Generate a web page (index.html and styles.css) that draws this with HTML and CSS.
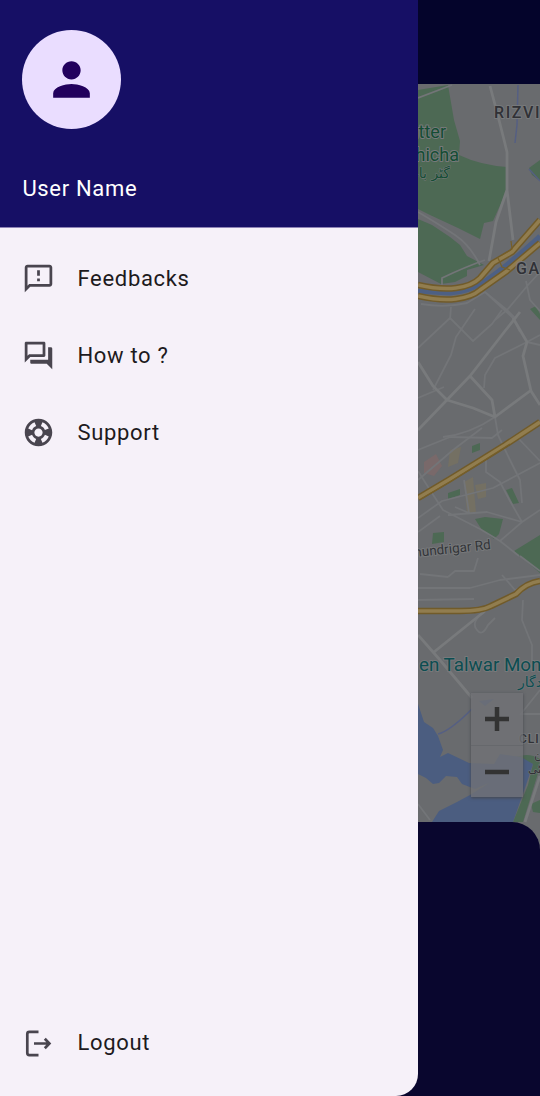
FILE: index.html
```html
<!DOCTYPE html>
<html lang="en">
<head>
<meta charset="utf-8">
<title>Menu</title>
<link rel="stylesheet" href="styles.css">
</head>
<body>
<div class="screen">
  <aside class="drawer">
    <header class="profile">
      <div class="avatar">
        <svg viewBox="0 0 24 24"><path d="M12 12c2.21 0 4-1.79 4-4s-1.79-4-4-4-4 1.79-4 4 1.79 4 4 4zm0 2c-2.67 0-8 1.34-8 4v2h16v-2c0-2.66-5.33-4-8-4z"/></svg>
      </div>
      <div class="name">User Name</div>
    </header>
    <nav class="menu">
      <a class="item"><svg class="icon" viewBox="0 0 24 24"><path d="M20 2H4c-1.1 0-2 .9-2 2v18l4-4h14c1.1 0 2-.9 2-2V4c0-1.1-.9-2-2-2zm0 14H5.2L4 17.2V4h16v12zM11 12h2v2h-2zm0-6h2v4h-2z"/></svg><span>Feedbacks</span></a>
      <a class="item"><svg class="icon" viewBox="0 0 24 24"><path d="M15 4v7H5.17L4 12.17V4h11m1-2H3c-.55 0-1 .45-1 1v14l4-4h10c.55 0 1-.45 1-1V3c0-.55-.45-1-1-1zm5 4h-2v9H6v2c0 .55.45 1 1 1h11l4 4V7c0-.55-.45-1-1-1z"/></svg><span>How to ?</span></a>
      <a class="item"><svg class="icon" viewBox="0 0 24 24"><path d="M12 2C6.48 2 2 6.48 2 12s4.48 10 10 10 10-4.48 10-10S17.52 2 12 2zm7.46 7.12l-2.78 1.15c-.51-1.36-1.58-2.44-2.95-2.94l1.15-2.78c2.1.8 3.77 2.47 4.58 4.57zM12 15c-1.66 0-3-1.34-3-3s1.34-3 3-3 3 1.34 3 3-1.34 3-3 3zM9.13 4.54l1.17 2.78c-1.38.5-2.47 1.59-2.98 2.97L4.54 9.13c.81-2.11 2.48-3.78 4.59-4.59zM4.54 14.87l2.78-1.15c.51 1.38 1.59 2.46 2.97 2.96l-1.17 2.78c-2.1-.81-3.77-2.48-4.58-4.59zm10.34 4.59l-1.15-2.78c1.37-.51 2.45-1.59 2.95-2.97l2.78 1.17c-.81 2.1-2.48 3.77-4.58 4.58z"/></svg><span>Support</span></a>
      <a class="item logout"><svg class="icon line" viewBox="0 0 33 33"><path d="M16.5 5.9H7.3Q5.3 5.9 5.3 7.9V27.1Q5.3 29.1 7.3 29.1H16.5M12 17.5H27M22.8 12.7 27.4 17.5 22.8 22.3"/></svg><span>Logout</span></a>
    </nav>
  </aside>
  <main class="behind">
    <div class="topbar"></div>
    <div class="mapwrap">
      <svg class="map" viewBox="418 84 122 766">
        <rect class="land" x="418" y="84" width="122" height="766"/>
        <g class="park">
          <path d="M418 90 448 85 454 120 460 141 459 155Q480 165 507 167V190L493 221 484 223 480 239 458 228 430 215 418 209Z"/>
          <path d="M418 219 432 225 450 237 460 245 467 256 484 265 467 270V276L455 282 441 284 418 272Z"/>
          <path d="M529 168 540 160V181L532 175ZM530 309 536 306 540 314V320Z"/>
          <path d="M472 446 480 443V450L472 453ZM448 493 460 489V495L448 499ZM506 490 512 488 519 503 513 504Z"/>
          <path d="M475 519 485 517 503 519 499 534 494 539 482 530ZM433 533 444 532V542L432 544ZM514 551 540 535V573Z"/>
          <path d="M516 757Q529 752 540 759L539 770 523 822H513L528 785 533 764ZM531 804 540 800V813L533 812Z"/>
        </g>
        <path class="hospital" d="M424 462 436 454 442 466 434 476 424 473Z"/>
        <path class="shop" d="M450 450 461 447 458 463 448 467ZM464 482 473 477 476 513H467ZM475 485 486 483V497L478 499Z"/>
        <g class="water">
          <path d="M418 704 424 722 433 728 438 736 443 750 440 757 448 753 469 763 494 764 500 754 521 757 533 764 526 785 513 822H432L439 811 457 802 470 795 489 783 475 789 462 784 457 777 446 776 439 783 433 784 426 778 418 774Z"/>
          <path d="M479 701 494 699 485 706Z"/>
        </g>
        <path class="stream" d="M438 734Q450 731 472 709M518 85 517 125 515 143M529 169 540 181"/>
        <g class="minor">
          <path d="M418 98 452 85M418 212Q440 225 455 235T480 265M442 285V278Q465 267 485 260M421 304Q445 308 467 303L485 292 513 318 520 332M485 292 507 310 528 285 540 272M495 320 507 310 516 319M526 281 530 300 540 311M451 307 450 320"/>
          <path d="M418 348 450 318 473 341 492 324 502 310M433 390 451 355 456 337 475 309M495 417 498 435 510 460 520 480 522 503M418 480 453 450 482 428"/>
          <path d="M540 345 527 342 495 358 485 375 484 388M540 335 527 342"/>
          <path d="M418 471 430 490 443 510 480 529 500 541 519 556M418 518 442 501 493 488 540 463M486 455V472L500 482 510 501 522 522M448 515 487 512 522 522M500 541 522 522 540 510M418 450 450 437 492 438 502 430M464 480 469 513 455 507M518 438 540 461M418 532 440 516"/>
          <path d="M448 577 455 571H474L478 558M418 588H470L500 580 540 575M418 600 474 599M520 556 540 571M485 611Q470 622 477 630 482 637 488 625L495 618M523 600 522 620 532 645V670M540 690 520 715M520 714H540M418 804 430 820"/>
          <path d="M418 398 444 387M443 437Q470 434 495 417M420 574 448 577M502 575 515 590 528 587"/>
        </g>
        <path class="road" d="M490 86Q500 123 507 152V190L496 222 489 261M507 190 513 240M418 430 470 376 505 331 520 312M418 362 433 386 447 400 473 408 495 417 530 391M470 376 492 400 495 417M513 318 527 342 523 356 531 391 540 405M485 611 434 652M418 635 440 660 472 698M540 776 525 822"/>
        <g class="canal"><path d="M418 291 450 293Q468 292 482 283T515 258 540 236"/></g>
        <g class="edge">
          <path d="M418 285Q440 290 456 288T480 278L493 263 512 252 540 220M418 296Q440 301 456 299T480 290L507 271 540 243"/>
          <path d="M418 498 450 479 476 463 505 445 540 422"/><path d="M418 611H460Q482 611 491 606L516 594Q526 583 540 581"/>
        </g>
        <g class="hwy">
          <path d="M418 285Q440 290 456 288T480 278L493 263 512 252 540 220M418 296Q440 301 456 299T480 290L507 271 540 243"/>
          <path d="M418 498 450 479 476 463 505 445 540 422"/><path d="M418 611H460Q482 611 491 606L516 594Q526 583 540 581"/>
        </g>
        <path class="ramp" d="M502 255 512 249 511 241M498 258 502 267 510 270M421 499 450 482 510 444"/>
        <g class="label poi">
          <text x="446" y="138" text-anchor="end">Gutter</text>
          <text x="459" y="161" text-anchor="end">Baghicha</text>
          <text class="arabic" x="450" y="178" text-anchor="end">گٹر باغیچہ</text>
        </g>
        <text class="label area" x="494" y="118">RIZVIA</text>
        <text class="label area" x="516" y="274">GARDEN</text>
        <text class="label street" x="491" y="549" text-anchor="end" transform="rotate(-6 491 549)">Chundrigar Rd</text>
        <text class="label teal" x="419" y="670.5">en Talwar Monument</text>
        <text class="label teal arabic" x="518" y="687">دگار</text>
        <text class="label small" x="519" y="743">CLIFTON</text>
        <text class="label small arabic" x="534" y="758">تن</text>
        <text class="label small arabic" x="528" y="773">کلفٹی</text>
      </svg>
      <div class="zoomer">
        <div class="zoombtn"><svg viewBox="0 0 24 24"><path d="M0 12H24M12 0V24"/></svg></div>
        <div class="zoombtn"><svg viewBox="0 0 24 24"><path d="M0 12H24"/></svg></div>
      </div>
    </div>
    <div class="sheet"></div>
  </main>
</div>
</body>
</html>
```
FILE: styles.css
```css
* { box-sizing: border-box; }
body { margin: 0; background: #09062e; font-family: Roboto, "Noto Sans", sans-serif; }
.screen { display: flex; width: 540px; height: 1096px; overflow: hidden; }
.drawer {
  display: flex; flex-direction: column; width: 418px; flex: none;
  background: #f6f1f9; border-bottom-right-radius: 22px; overflow: hidden;
}
.profile {
  height: 228px; flex: none; padding: 29.5px 22px 0; background: #160f65;
  border-bottom: 1px solid #8e83b6; color: #fff;
}
.avatar {
  display: flex; align-items: center; justify-content: center;
  width: 99px; height: 99px; border-radius: 50%; background: #eaddff;
}
.avatar svg { width: 55px; height: 55px; fill: #22005d; }
.name { margin: 46.5px 0 0 .4px; font-size: 22px; line-height: 28px; letter-spacing: .68px; }
.menu { display: flex; flex: 1; flex-direction: column; padding: 11.5px 22px 15.5px; }
.item {
  display: flex; align-items: center; gap: 22.5px; height: 77px; flex: none;
  color: #1d1a20; font-size: 22px; line-height: 25px; letter-spacing: .68px;
}
.icon { width: 33px; height: 33px; fill: #49454f; }
.line { fill: none; stroke: #49454f; stroke-width: 2.7; }
.logout { margin-top: auto; }
.behind { display: flex; flex-direction: column; width: 122px; flex: none; }
.topbar { height: 84px; flex: none; background: #04042b; }
.mapwrap { position: relative; height: 766px; flex: none; overflow: hidden; }
.map { display: block; width: 122px; height: 766px; }
.land { fill: #696b6e; }
.park { fill: #4d6954; }
.water { fill: #4b5d80; }
.hospital { fill: #79696a; }
.shop { fill: #747063; }
.stream, .minor, .road, .canal, .edge, .hwy, .ramp { fill: none; stroke-linejoin: round; }
.stream { stroke: #555f83; stroke-width: 1.5; }
.minor { stroke: #737578; stroke-width: 1.8; }
.road { stroke: #787a7c; stroke-width: 2.8; }
.canal { stroke: #4d6084; stroke-width: 5; }
.edge { stroke: #715b2a; stroke-width: 6.5; }
.hwy { stroke: #917d4f; stroke-width: 3.6; }
.ramp { stroke: #765f2a; stroke-width: 1.2; }
.label { paint-order: stroke; stroke: #77797b; stroke-width: 2px; stroke-linejoin: round; }
.poi { fill: #144d34; font-size: 18px; }
.area { fill: #303136; font-size: 16px; font-weight: 500; letter-spacing: 1.6px; }
.street { fill: #333539; font-size: 13.5px; }
.teal { fill: #0c4d51; font-size: 18.8px; }
.small { fill: #303136; font-size: 12px; font-weight: 500; letter-spacing: 1px; }
.arabic { font-family: "DejaVu Sans", sans-serif; font-size: 14px; font-weight: 400; letter-spacing: 0; stroke-width: 1px; }
.small.arabic { font-size: 12px; }
.zoomer {
  position: absolute; left: 53px; top: 609px; width: 52px; height: 104px;
  box-shadow: 0 1px 3px #44474d;
}
.zoombtn {
  display: flex; align-items: center; justify-content: center;
  height: 52px; background: rgba(113, 114, 117, .8);
}
.zoombtn + .zoombtn { border-top: 1px solid #66686c; }
.zoombtn svg { width: 24px; height: 24px; stroke: #333; stroke-width: 4.5; }
.sheet {
  position: relative; margin-top: -28px; height: 274px; flex: none;
  border-top-right-radius: 28px; background: #09062e;
}
```
